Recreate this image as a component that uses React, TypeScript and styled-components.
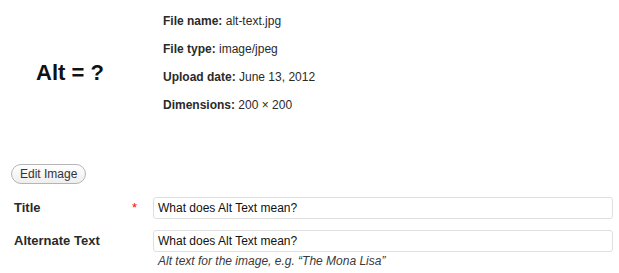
import React from "react";
import styled, { createGlobalStyle } from "styled-components";

const GlobalStyle = createGlobalStyle`
  html, body { margin: 0; padding: 0; background: #fff; }
  body { font-family: "Liberation Sans", Arial, Helvetica, sans-serif; color: #333; }
`;

const Page = styled.div`
  width: 619px;
  box-sizing: border-box;
  padding: 6px 6px 0 6px;
`;

const Top = styled.div`
  display: flex;
  align-items: flex-start;
  gap: 29px;
`;

const Thumbnail = styled.div`
  width: 128px;
  height: 128px;
  margin-top: 3px;
  background: #fff;
  display: flex;
  align-items: center;
  justify-content: center;
  font-family: "Liberation Sans", Arial, sans-serif;
  font-weight: bold;
  font-size: 22px;
  color: #111;
`;

const Details = styled.div`
  display: flex;
  flex-direction: column;
  margin-top: 0.5px;
`;

const DetailRow = styled.div`
  height: 28px;
  line-height: 28px;
  font-size: 12px;
  color: #2a2a2a;
  white-space: nowrap;
`;

const DetailKey = styled.strong`
  font-weight: bold;
`;

const EditButton = styled.button`
  display: block;
  margin: 27px 0 0 5px;
  height: 20px;
  padding: 0 8px;
  box-sizing: border-box;
  border: 1px solid #b5b5b5;
  border-radius: 11px;
  background: linear-gradient(#ffffff, #eeeeee);
  font-family: "Liberation Sans", Arial, sans-serif;
  font-size: 12px;
  line-height: 18px;
  color: #333;
  cursor: pointer;
`;

const Form = styled.div`
  display: grid;
  grid-template-columns: 139px 1fr;
  row-gap: 11px;
  margin: 13px 0 0 8px;
  align-items: center;
`;

const Label = styled.div<{ $top?: boolean }>`
  display: flex;
  justify-content: space-between;
  align-items: center;
  align-self: ${(p) => (p.$top ? "start" : "center")};
  padding-right: 16px;
  font-size: 13px;
  font-weight: bold;
  color: #2a2a2a;
  height: 22px;
  line-height: 22px;
`;

const Required = styled.span`
  color: #f00;
  font-weight: normal;
  font-size: 13px;
`;

const Field = styled.div`
  display: flex;
  flex-direction: column;
`;

const TextInput = styled.input`
  height: 22px;
  box-sizing: border-box;
  width: 100%;
  border: 1px solid #dfdfdf;
  border-radius: 3px;
  padding: 0 4px;
  margin: 0;
  font-family: "Liberation Sans", Arial, sans-serif;
  font-size: 12px;
  color: #111;
  background: #fff;
  outline: none;
`;

const Help = styled.div`
  margin-top: 2px;
  padding-left: 5px;
  font-size: 12px;
  line-height: 15px;
  font-style: italic;
  color: #3a3a3a;
`;

const details: [string, string][] = [
  ["File name:", "alt-text.jpg"],
  ["File type:", "image/jpeg"],
  ["Upload date:", "June 13, 2012"],
  ["Dimensions:", "200 × 200"],
];

export default function App() {
  return (
    <>
      <GlobalStyle />
      <Page>
        <Top>
          <Thumbnail>Alt = ?</Thumbnail>
          <Details>
            {details.map(([k, v]) => (
              <DetailRow key={k}>
                <DetailKey>{k}</DetailKey> {v}
              </DetailRow>
            ))}
          </Details>
        </Top>
        <EditButton type="button">Edit Image</EditButton>
        <Form>
          <Label>
            <span>Title</span>
            <Required>*</Required>
          </Label>
          <Field>
            <TextInput defaultValue="What does Alt Text mean?" />
          </Field>
          <Label $top>
            <span>Alternate Text</span>
          </Label>
          <Field>
            <TextInput defaultValue="What does Alt Text mean?" />
            <Help>Alt text for the image, e.g. “The Mona Lisa”</Help>
          </Field>
        </Form>
      </Page>
    </>
  );
}
